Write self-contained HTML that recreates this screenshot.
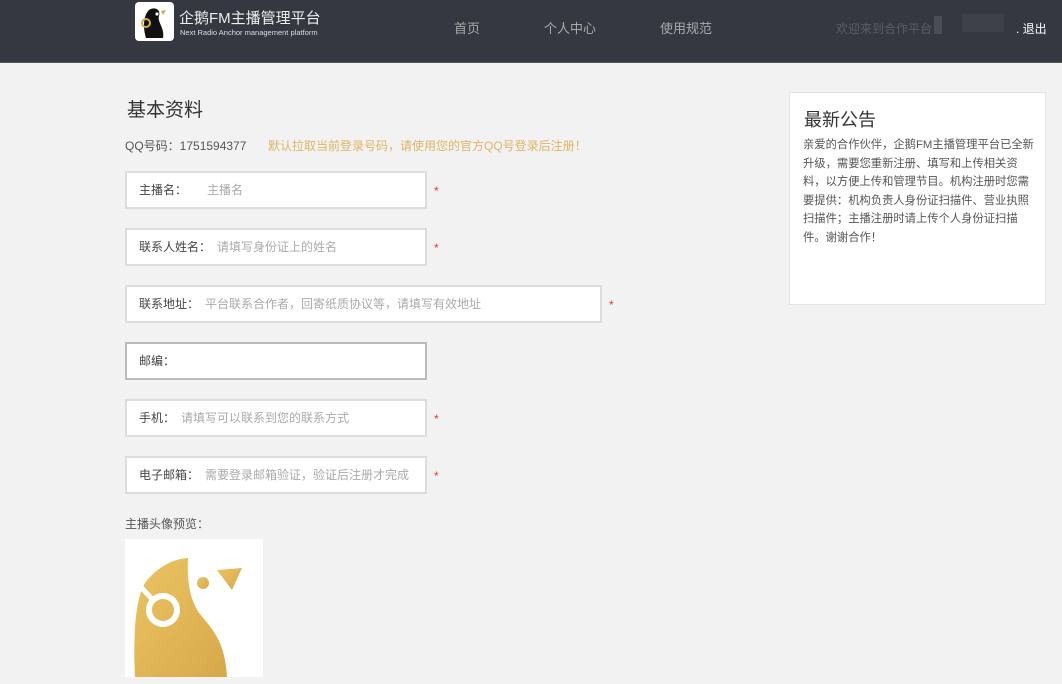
<!DOCTYPE html>
<html><head><meta charset="utf-8"><style>
*{margin:0;padding:0;box-sizing:border-box}
body{width:1062px;height:684px;background:#f2f2f2;font-family:"Liberation Sans","Noto Sans CJK SC",sans-serif;position:relative;overflow:hidden;color:#333}
.hd{position:absolute;left:0;top:0;width:1062px;height:63px;background:#353841;border-bottom:1px solid #555}
.logo{position:absolute;left:135px;top:2px;width:39px;height:39px;background:#fff;border-radius:4px;overflow:hidden}
.t1{position:absolute;left:179px;top:7px;color:#eee;font-size:15px}
.t2{position:absolute;left:180px;top:28px;color:#ddd;font-size:7.5px}
.nav{position:absolute;top:18px;color:#aaa;font-size:13px}
.ab{position:absolute}
.in{position:absolute;left:125px;width:302px;height:38px;background:#fff;border:2px solid #ddd;font-size:12px;line-height:34px;padding-left:12px;color:#444}
.in span{color:#aaa;margin-left:14px}
.st{position:absolute;left:434px;color:#e33;font-size:12px}
</style></head><body>
<div class="hd">
<div class="logo"><svg width="39" height="39" viewBox="0 0 39 39"><path d="M11 36 C8 26 8 14 14 8 C20 4 26 8 24 14 C22 20 30 26 28 36 Z" fill="#111"/><circle cx="11" cy="21" r="4" fill="none" stroke="#d4a94a" stroke-width="2"/><circle cx="22" cy="12" r="1.6" fill="#fff"/><path d="M26 9 L31 8 L28 13Z" fill="#d4a94a"/></svg></div>
<div class="t1">企鹅FM主播管理平台</div>
<div class="t2">Next Radio Anchor management platform</div>
<div class="nav" style="left:454px">首页</div>
<div class="nav" style="left:544px">个人中心</div>
<div class="nav" style="left:660px">使用规范</div>
<div class="ab" style="left:836px;top:20px;color:#5a5d66;font-size:12px">欢迎来到合作平台</div>
<div class="ab" style="left:934px;top:16px;width:8px;height:18px;background:#4a4d56"></div>
<div class="ab" style="left:962px;top:14px;width:42px;height:18px;background:#3e414a"></div>
<div class="ab" style="left:1016px;top:20px;color:#fff;font-size:12px">.&nbsp;退出</div>
</div>
<div class="ab" style="left:127px;top:95px;font-size:19px;color:#333">基本资料</div>
<div class="ab" style="left:125px;top:137px;font-size:12px;color:#555">QQ号码：1751594377</div>
<div class="ab" style="left:268px;top:137px;font-size:12px;color:#e0b566">默认拉取当前登录号码，请使用您的官方QQ号登录后注册！</div>
<div class="in" style="top:171px">主播名：<span style="margin-left:20px">主播名</span></div><div class="st" style="top:184px">*</div>
<div class="in" style="top:228px">联系人姓名：<span style="margin-left:6px">请填写身份证上的姓名</span></div><div class="st" style="top:241px">*</div>
<div class="in" style="top:285px;width:477px">联系地址：<span style="margin-left:6px">平台联系合作者，回寄纸质协议等，请填写有效地址</span></div><div class="st" style="top:298px;left:609px">*</div>
<div class="in" style="top:342px;border-color:#bbb">邮编：</div>
<div class="in" style="top:399px">手机：<span style="margin-left:6px">请填写可以联系到您的联系方式</span></div><div class="st" style="top:412px">*</div>
<div class="in" style="top:456px">电子邮箱：<span style="margin-left:6px">需要登录邮箱验证，验证后注册才完成</span></div><div class="st" style="top:469px">*</div>
<div class="ab" style="left:125px;top:515px;font-size:12px;color:#555">主播头像预览：</div>
<div class="ab" style="left:125px;top:539px;width:138px;height:138px;background:#fff">
<svg width="138" height="138" viewBox="0 0 138 138"><defs><linearGradient id="g" x1="0" y1="0" x2="1" y2="1"><stop offset="0" stop-color="#ebc463"/><stop offset="1" stop-color="#d7a84a"/></linearGradient></defs>
<path d="M10 138 C8 100 10 60 20 44 C32 28 48 20 63 19 C62 40 64 60 75 75 C85 88 100 100 102 138 Z" fill="url(#g)"/>
<circle cx="38" cy="71" r="14" fill="none" stroke="#fff" stroke-width="6"/>
<path d="M15 47 L27 60" stroke="#fff" stroke-width="5"/>
<circle cx="78" cy="44" r="6" fill="url(#g)"/><path d="M92 31 L117 29 L107 51Z" fill="url(#g)"/></svg></div>
<div class="ab" style="left:789px;top:92px;width:257px;height:213px;background:#fff;border:1px solid #e4e4e4">
<div style="position:absolute;left:14px;top:13px;font-size:18px;color:#333">最新公告</div>
<div style="position:absolute;left:13px;top:43px;white-space:nowrap;font-size:11.3px;line-height:18.5px;color:#555">亲爱的合作伙伴，企鹅FM主播管理平台已全新<br>升级，需要您重新注册、填写和上传相关资<br>料，以方便上传和管理节目。机构注册时您需<br>要提供：机构负责人身份证扫描件、营业执照<br>扫描件；主播注册时请上传个人身份证扫描<br>件。谢谢合作！</div>
</div>
</body></html>
